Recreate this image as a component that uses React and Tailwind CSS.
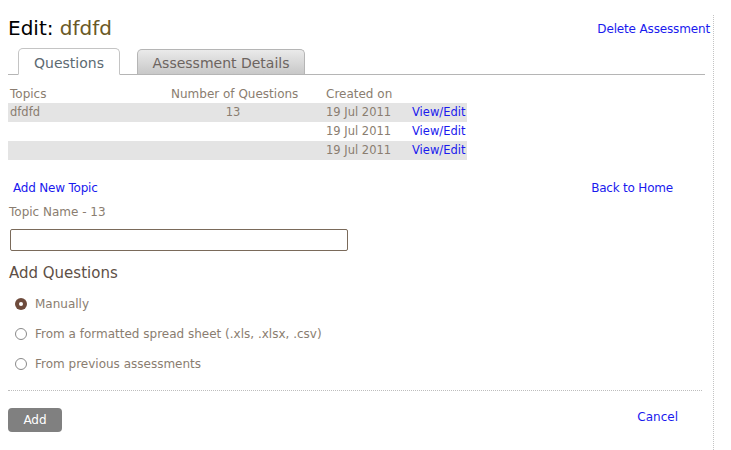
const rows = [
  { topic: "dfdfd", count: "13", date: "19 Jul 2011", shade: true },
  { topic: "", count: "", date: "19 Jul 2011", shade: false },
  { topic: "", count: "", date: "19 Jul 2011", shade: true },
];

const options = [
  { label: "Manually", checked: true },
  { label: "From a formatted spread sheet (.xls, .xlsx, .csv)", checked: false },
  { label: "From previous assessments", checked: false },
];

const Radio = ({ checked }) =>
  checked ? (
    <span className="w-[12px] h-[12px] rounded-full bg-[#6e4b3c] flex items-center justify-center">
      <span className="w-[4px] h-[4px] rounded-full bg-white" />
    </span>
  ) : (
    <span className="w-[12px] h-[12px] rounded-full border border-[#8a8a8a] bg-white" />
  );

export default function App() {
  return (
    <div className="w-[731px] h-[450px] bg-white font-['DejaVu_Sans',Verdana,sans-serif] flex">
      <div className="w-[713px] pl-[8px] pr-[3px] flex flex-col">
        {/* TITLE */}
        <div className="flex items-end justify-between pt-[14px]">
          <h1 className="text-[20px] leading-[28px] text-black">
            Edit: <span className="text-[#6b5a26]">dfdfd</span>
          </h1>
          <a className="text-[12px] text-[#1a1aee] mb-[4px] tracking-[-0.15px]">Delete Assessment</a>
        </div>

        {/* TABS */}
        <div className="flex items-end gap-[17px] pl-[10px] mt-[5px] mr-[5px] border-b border-[#b5b5b5] h-[28px]">
          <div className="w-[102px] h-[27px] -mb-px pt-[3px] bg-white border border-[#c4c4c4] border-b-white rounded-t-[5px] flex items-center justify-center text-[14px] text-[#5d6a72]">
            Questions
          </div>
          <div className="w-[168px] h-[25px] pt-[2px] bg-gradient-to-b from-[#eaeaea] to-[#c8c8c8] border border-[#b5b5b5] border-b-0 rounded-t-[5px] flex items-center justify-center text-[14px] text-[#6c6460]">
            Assessment Details
          </div>
        </div>

        {/* TABLE */}
        <div className="w-[459px] mt-[9px] text-[#8a7d70]">
          <div className="flex h-[19px] items-center text-[12px]">
            <div className="w-[160px] pl-[2px]">Topics</div>
            <div className="w-[158px] pl-[3px]">Number of Questions</div>
            <div className="w-[86px]">Created on</div>
          </div>
          {rows.map((r, i) => (
            <div
              key={i}
              className={`flex h-[19px] items-center text-[11.5px] ${r.shade ? "bg-[#e4e4e4]" : ""}`}
            >
              <div className="w-[160px] pl-[2px]">{r.topic}</div>
              <div className="w-[158px] text-center pr-[28px]">{r.count}</div>
              <div className="w-[86px]">{r.date}</div>
              <a className="text-[#1a1aee]">View/Edit</a>
            </div>
          ))}
        </div>

        {/* LINKS */}
        <div className="flex justify-between mt-[19px] pl-[5px] pr-[37px] text-[12px] text-[#1a1aee] tracking-[-0.2px]">
          <a>Add New Topic</a>
          <a>Back to Home</a>
        </div>

        <div className="mt-[6px] pl-[1px] text-[12px] text-[#8a7d70]">Topic Name - 13</div>

        <input
          type="text"
          className="mt-[8px] ml-[2px] w-[338px] h-[22px] border border-[#7a6a5a] rounded-[2px] bg-white outline-none"
        />

        <h2 className="mt-[11px] pl-[1px] text-[15px] text-[#5e5046]">Add Questions</h2>

        {/* OPTIONS */}
        <div className="flex flex-col gap-[12px] mt-[10px] pl-[7px]">
          {options.map((o) => (
            <label key={o.label} className="flex items-center gap-[8px] h-[18px] text-[12px] text-[#8a7d70]">
              <Radio checked={o.checked} />
              <span>{o.label}</span>
            </label>
          ))}
        </div>

        <div className="mt-[17px] mr-[8px] border-t border-dotted border-[#bdbdbd]" />

        {/* ACTIONS */}
        <div className="flex items-center justify-between mt-[17px] pr-[32px]">
          <button className="w-[54px] h-[24px] rounded-[4px] bg-[#808080] text-white text-[12px]">Add</button>
          <a className="text-[12px] text-[#1a1aee] mb-[7px]">Cancel</a>
        </div>
      </div>
      <div className="mt-[15px] h-[435px] border-l border-dotted border-[#c4c4c4]" />
    </div>
  );
}
